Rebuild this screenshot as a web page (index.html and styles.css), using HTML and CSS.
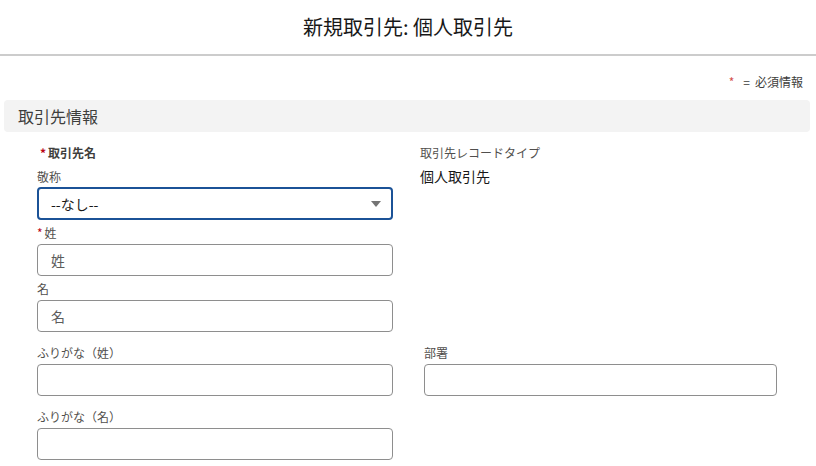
FILE: index.html
```html
<!DOCTYPE html>
<html lang="ja">
<head>
<meta charset="utf-8">
<title>新規取引先: 個人取引先</title>
<link rel="stylesheet" href="styles.css">
</head>
<body>
<header class="modal-header">
  <h2 class="modal-title">新規取引先: 個人取引先</h2>
</header>
<main class="modal-body">
  <p class="required-note"><abbr class="req note-req">*</abbr><span class="eq">=</span>必須情報</p>
  <h3 class="section-bar">取引先情報</h3>
  <div class="form-grid">
    <fieldset class="compound">
      <legend class="legend"><abbr class="req">*</abbr>取引先名</legend>
      <div class="sub-field">
        <label class="label label-tight">敬称</label>
        <div class="combobox">
          <span class="combo-value">--なし--</span>
          <svg class="combo-arrow" width="10" height="6" viewBox="0 0 10 6"><path d="M0 0 H10 L5 6 Z" fill="#747474"/></svg>
        </div>
      </div>
      <div class="sub-field">
        <label class="label"><abbr class="req">*</abbr>姓</label>
        <input class="input" type="text" placeholder="姓">
      </div>
      <div class="sub-field">
        <label class="label">名</label>
        <input class="input" type="text" placeholder="名">
      </div>
    </fieldset>
    <div class="readonly">
      <div class="label">取引先レコードタイプ</div>
      <div class="readonly-value">個人取引先</div>
    </div>
    <div class="field">
      <label class="label">ふりがな（姓）</label>
      <input class="input" type="text">
    </div>
    <div class="field">
      <label class="label">部署</label>
      <input class="input input-right" type="text">
    </div>
    <div class="field">
      <label class="label">ふりがな（名）</label>
      <input class="input" type="text">
    </div>
  </div>
</main>
</body>
</html>
```

FILE: styles.css
```css
* { box-sizing: border-box; }
html, body { margin: 0; padding: 0; background: #ffffff; }
body {
  font-family: "Noto Sans CJK JP", "Noto Sans", sans-serif;
  color: #181818;
  width: 816px;
  height: 466px;
  overflow: hidden;
}
.modal-header {
  height: 56px;
  border-bottom: 2px solid #cccccc;
  display: flex;
  align-items: center;
  justify-content: center;
}
.modal-title {
  margin: 0;
  font-size: 20px;
  font-weight: 400;
  line-height: 24px;
  color: #181818;
}
.modal-body {
  padding: 0 6px 0 4px;
}
.required-note {
  margin: 17px 0 0;
  padding-right: 7px;
  text-align: right;
  font-size: 12px;
  line-height: 18px;
  color: #3e3e3c;
}
.req {
  color: #ba0517;
  text-decoration: none;
  border: 0;
  margin-right: 2px;
}
.note-req { color: #d4504c; margin-right: 9px; }
.eq { margin-right: 5px; }
.section-bar {
  margin: 9px 0 0;
  height: 32px;
  background: #f3f3f3;
  border-radius: 4px;
  padding-left: 14px;
  font-size: 16px;
  font-weight: 400;
  line-height: 32px;
  color: #3e3e3c;
}
.form-grid {
  margin-top: 12px;
  padding-left: 33px;
  display: grid;
  grid-template-columns: 356px 354px;
  column-gap: 31px;
  row-gap: 12px;
}
.compound {
  margin: 0;
  padding: 0;
  border: 0;
  min-width: 0;
}
.legend {
  padding: 0 0 0 3px;
  font-size: 12px;
  font-weight: 700;
  line-height: 18px;
  color: #3e3e3c;
  float: left;
  width: 100%;
}
.sub-field {
  clear: both;
  margin-top: 4px;
}
.sub-field:first-of-type { margin-top: 0; padding-top: 6px; }
.label {
  display: block;
  font-size: 12px;
  line-height: 18px;
  margin-bottom: 2px;
  color: #514f4d;
}
.label-tight { margin-bottom: 1px; }
.combobox {
  height: 33px;
  border: 2px solid #1b5297;
  border-radius: 4px;
  padding: 0 10px 0 12px;
  display: flex;
  align-items: center;
  justify-content: space-between;
}
.combo-value {
  font-size: 14px;
  line-height: 20px;
  color: #181818;
}
.combo-arrow { display: block; margin-top: 1px; }
.input {
  display: block;
  width: 100%;
  height: 32px;
  margin: 0;
  border: 1px solid #8e8e8e;
  border-radius: 4px;
  padding: 0 13px;
  font-family: "Noto Sans CJK JP", "Noto Sans", sans-serif;
  font-size: 14px;
  color: #181818;
  background: #ffffff;
  outline: none;
}
.input::placeholder { color: #5c5c5c; }
.input-right { width: 353px; }
.readonly { margin-left: -4px; }
.readonly .label { margin-bottom: 4px; }
.readonly-value {
  font-size: 14px;
  line-height: 20px;
  color: #181818;
}
```
